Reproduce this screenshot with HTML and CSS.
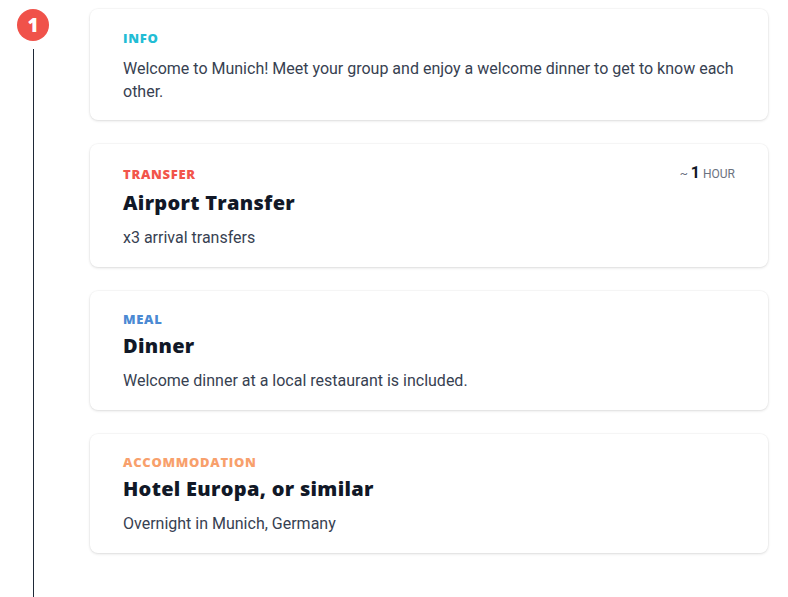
FILE: index.html
```html
<!DOCTYPE html>
<html>
<head>
<meta charset="utf-8">
<link rel="stylesheet" href="styles.css">
</head>
<body>
<div class="day">
  <div class="rail">
    <div class="badge">1</div>
    <div class="line"></div>
  </div>
  <div class="cards">
    <div class="card note">
      <div class="head"><span class="tag info">Info</span></div>
      <p class="desc">Welcome to Munich! Meet your group and enjoy a welcome dinner to get to know each other.</p>
    </div>
    <div class="card">
      <div class="head">
        <span class="tag transfer">Transfer</span>
        <span class="dur"><span class="tilde">~</span> <b>1</b> <span class="unit">Hour</span></span>
      </div>
      <h3 class="title">Airport Transfer</h3>
      <p class="desc">x3 arrival transfers</p>
    </div>
    <div class="card">
      <div class="head"><span class="tag meal">Meal</span></div>
      <h3 class="title">Dinner</h3>
      <p class="desc">Welcome dinner at a local restaurant is included.</p>
    </div>
    <div class="card">
      <div class="head"><span class="tag acc">Accommodation</span></div>
      <h3 class="title">Hotel Europa, or similar</h3>
      <p class="desc">Overnight in Munich, Germany</p>
    </div>
  </div>
</div>
</body>
</html>
```

FILE: styles.css
```css
html, body {
  margin: 0;
  padding: 0;
  background: #fff;
}
body {
  font-family: Roboto, "Liberation Sans", sans-serif;
  color: #374151;
}
.day {
  display: flex;
  padding: 9px 20px 60px 17px;
  gap: 41px;
}
.rail {
  display: flex;
  flex-direction: column;
  align-items: center;
  width: 32px;
  flex: none;
}
.badge {
  width: 32px;
  height: 32px;
  border-radius: 50%;
  background: #f0524a;
  color: #fff;
  font-family: "Open Sans", sans-serif;
  font-weight: 800;
  font-size: 19px;
  line-height: 32px;
  text-align: center;
}
.line {
  flex: 1;
  width: 1px;
  background: #1f2937;
  margin-top: 8px;
  min-height: 600px;
}
.cards {
  flex: 1;
  display: flex;
  flex-direction: column;
  gap: 24px;
}
.card {
  background: #fff;
  border-radius: 8px;
  box-shadow: 0 1px 3px rgba(0,0,0,0.12), 0 0 0 1px rgba(0,0,0,0.025);
  padding: 20px 33px 17px 33px;
}
.card.note {
  padding-top: 21px;
}
.head {
  display: flex;
  justify-content: space-between;
  align-items: center;
  min-height: 16px;
}
.tag {
  font-family: "Open Sans", sans-serif;
  font-weight: 800;
  font-size: 13px;
  line-height: 16px;
  text-transform: uppercase;
  letter-spacing: 0.7px;
}
.info { color: #22bdd5; }
.transfer { color: #f2554b; }
.meal { color: #4b8ad3; }
.acc { color: #f8a06c; }
.dur {
  display: block;
  height: 20px;
  font-size: 12px;
  line-height: 20px;
  color: #6b7280;
}
.dur b {
  font-size: 16px;
  line-height: 1;
  color: #111827;
  font-weight: 700;
}
.tilde { font-size: 12px; }
.unit { text-transform: uppercase; }
.title {
  margin: 5px 0 0;
  font-family: "Open Sans", sans-serif;
  font-weight: 800;
  font-size: 20px;
  line-height: 28px;
  letter-spacing: 0.3px;
  color: #111827;
}
.desc {
  margin: 9px 0 0;
  font-size: 16px;
  line-height: 24px;
  color: #374151;
}
.card > .head + .desc {
  margin-top: 11px;
  line-height: 23px;
}
```
